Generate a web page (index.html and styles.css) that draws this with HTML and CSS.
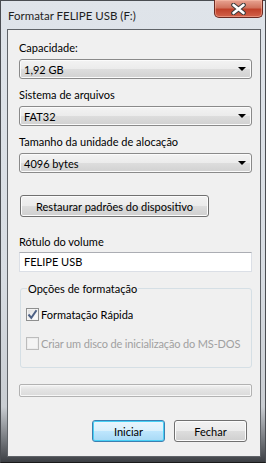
FILE: index.html
```html
<!DOCTYPE html>
<html lang="pt-BR">

<head>
  <meta charset="UTF-8">
  <title>Formatar FELIPE USB (F:)</title>
  <link rel="stylesheet" href="styles.css">
</head>

<body>
  <div class="window">

    <!-- Title bar -->
    <div class="titlebar">
      <span class="title">Formatar FELIPE USB (F:)</span>
      <div class="close-btn">
        <svg width="15" height="12" viewBox="0 0 15 12">
          <path d="M2.5 2 L12.5 10 M12.5 2 L2.5 10" stroke="#3b3b3b" stroke-width="4.6" stroke-linecap="round" />
          <path d="M2.5 2 L12.5 10 M12.5 2 L2.5 10" stroke="#ffffff" stroke-width="2.6" stroke-linecap="round" />
        </svg>
      </div>
    </div>

    <!-- Client area -->
    <div class="client">
      <div class="field-label first">Capacidade:</div>
      <div class="combo"><span>1,92 GB</span><span class="arrow"></span></div>

      <div class="field-label">Sistema de arquivos</div>
      <div class="combo"><span>FAT32</span><span class="arrow"></span></div>

      <div class="field-label">Tamanho da unidade de alocação</div>
      <div class="combo"><span>4096 bytes</span><span class="arrow"></span></div>

      <div class="btn restore-btn">Restaurar padrões do dispositivo</div>

      <div class="field-label volume-label">Rótulo do volume</div>
      <div class="textbox">FELIPE USB</div>

      <fieldset class="group">
        <legend>Opções de formatação</legend>
        <div class="check-row quick">
          <span class="checkbox">
            <svg width="11" height="11" viewBox="0 0 11 11">
              <path d="M1.5 5.5 L4.3 8.8 L9.5 1.2" fill="none" stroke="#4d6185" stroke-width="2" />
            </svg>
          </span>
          <span>Formatação Rápida</span>
        </div>
        <div class="check-row disabled">
          <span class="checkbox"></span>
          <span class="narrow">Criar um disco de inicialização do MS-DOS</span>
        </div>
      </fieldset>

      <div class="progress"></div>

      <div class="actions">
        <div class="btn default-btn">Iniciar</div>
        <div class="btn">Fechar</div>
      </div>
    </div>

  </div>
</body>

</html>
```

FILE: styles.css
```css
body {
  margin: 0;
  font-family: Lato, "Noto Sans", sans-serif;
  font-size: 11px;
  color: #000;
  width: 266px;
  height: 463px;
  overflow: hidden;
  white-space: nowrap;
}

.window {
  width: 266px;
  height: 463px;
  box-sizing: border-box;
  border: 1px solid #4a4d52;
  border-bottom-color: #1a1a1a;
  background: linear-gradient(to bottom, #dfe4ea 0%, #d7dce2 60%, #c9cdd2 88%, #3c3f44 100%);
}

/* Title bar */
.titlebar {
  display: flex;
  justify-content: space-between;
  align-items: flex-start;
  height: 28px;
}

.title {
  padding: 7px 0 0 7px;
  line-height: 15px;
  font-size: 11.5px;
  color: #1e1e1e;
}

.close-btn {
  width: 49px;
  height: 18px;
  margin-right: 2px;
  margin-top: -1px;
  box-sizing: border-box;
  border: 1px solid #6b2a22;
  border-top: none;
  border-radius: 0 0 5px 5px;
  background: linear-gradient(to bottom, #e8a493 0%, #d1735e 45%, #c0412a 55%, #d2624a 100%);
  box-shadow: inset 0 0 0 1px rgba(255, 200, 180, 0.45);
  display: flex;
  justify-content: center;
  align-items: center;
}

/* Client area */
.client {
  margin-left: 6px;
  width: 254px;
  height: 428px;
  box-sizing: border-box;
  border: 1px solid #5f6368;
  background: #f0f0f0;
  padding: 0 8px 0 11px;
}

.field-label {
  line-height: 15px;
  margin-top: 8px;
}

.field-label.first {
  margin-top: 10px;
}

.combo {
  margin-top: 4px;
  height: 20px;
  box-sizing: border-box;
  border: 1px solid #8a8a8a;
  border-radius: 3px;
  background: linear-gradient(to bottom, #f3f3f3 0%, #ebebeb 50%, #dddddd 51%, #d1d1d1 100%);
  box-shadow: inset 0 0 0 1px #fbfbfb;
  display: flex;
  justify-content: space-between;
  align-items: center;
  padding: 0 4px 0 4px;
  line-height: 15px;
}

.arrow {
  width: 0;
  height: 0;
  border-left: 4px solid transparent;
  border-right: 4px solid transparent;
  border-top: 4px solid #000;
  margin-right: 1px;
}

.btn {
  height: 22px;
  box-sizing: border-box;
  border: 1px solid #707070;
  border-radius: 3px;
  background: linear-gradient(to bottom, #f2f2f2 0%, #ebebeb 50%, #dddddd 51%, #cfcfcf 100%);
  box-shadow: inset 0 0 0 1px #fcfcfc;
  display: flex;
  justify-content: center;
  align-items: center;
  line-height: 15px;
}

.restore-btn {
  margin-top: 22px;
  margin-left: 1px;
  width: 189px;
}

.field-label.volume-label {
  margin-top: 17px;
}

.textbox {
  margin-top: 3px;
  height: 20px;
  box-sizing: border-box;
  border: 1px solid #dbdfe6;
  border-top-color: #abadb3;
  background: #fff;
  padding: 0 4px;
  line-height: 18px;
}

/* Group box */
.group {
  margin: 9px 0 0 1px;
  width: 232px;
  box-sizing: border-box;
  border: 1px solid #d5dfe5;
  border-radius: 3px;
  padding: 0 0 16px 5px;
  min-width: 0;
}

.group legend {
  padding: 0 1px;
  margin-left: 1px;
  line-height: 15px;
}

.check-row {
  display: flex;
  align-items: center;
  gap: 2px;
  line-height: 15px;
}

.check-row.quick {
  margin-top: 11px;
}

.check-row.disabled {
  margin-top: 14px;
  color: #a0a0a0;
}

.narrow {
  letter-spacing: -0.15px;
}

.checkbox {
  width: 13px;
  height: 13px;
  box-sizing: border-box;
  border: 1px solid #8e8f8f;
  background: linear-gradient(135deg, #dcdcdc 0%, #f4f4f4 60%, #ffffff 100%);
  box-shadow: inset 0 0 0 1px #f4f4f4;
  display: flex;
  justify-content: center;
  align-items: center;
}

.disabled .checkbox {
  border-color: #bcbcbc;
  background: #f4f4f4;
  box-shadow: inset 0 0 0 1px #ececec;
}

/* Progress bar */
.progress {
  margin-top: 16px;
  height: 13px;
  box-sizing: border-box;
  border: 1px solid #b2b2b2;
  border-radius: 2px;
  background: linear-gradient(to bottom, #f3f3f3 0%, #e4e4e4 40%, #dadada 100%);
  box-shadow: inset 0 0 0 1px #f7f7f7;
}

/* Bottom buttons */
.actions {
  margin-top: 23px;
  display: flex;
  justify-content: flex-end;
  gap: 9px;
  padding-right: 5px;
}

.actions .btn {
  width: 73px;
}

.default-btn {
  border-color: #3c7fb1;
  background: linear-gradient(to bottom, #eaf6fd 0%, #d9f0fc 50%, #bee6fd 51%, #a7d9f5 100%);
  box-shadow: inset 0 0 0 1px #48d0f5;
}
```
